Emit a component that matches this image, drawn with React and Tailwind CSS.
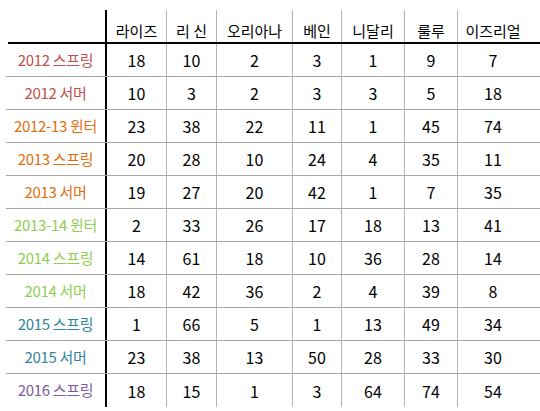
import React from "react";

const heroes = ["라이즈", "리 신", "오리아나", "베인", "니달리", "룰루", "이즈리얼"];
const widths = ["w-[60px]", "w-[50px]", "w-[76px]", "w-[49px]", "w-[63px]", "w-[53px]", "w-[70px]"];

const rows = [
  { label: "2012 스프링", color: "text-[#c0504d]", v: [18, 10, 2, 3, 1, 9, 7] },
  { label: "2012 서머", color: "text-[#c0504d]", v: [10, 3, 2, 3, 3, 5, 18] },
  { label: "2012-13 윈터", color: "text-[#e46c0a]", v: [23, 38, 22, 11, 1, 45, 74] },
  { label: "2013 스프링", color: "text-[#e46c0a]", v: [20, 28, 10, 24, 4, 35, 11] },
  { label: "2013 서머", color: "text-[#e46c0a]", v: [19, 27, 20, 42, 1, 7, 35] },
  { label: "2013-14 윈터", color: "text-[#8fce4f]", v: [2, 33, 26, 17, 18, 13, 41] },
  { label: "2014 스프링", color: "text-[#8fce4f]", v: [14, 61, 18, 10, 36, 28, 14] },
  { label: "2014 서머", color: "text-[#8fce4f]", v: [18, 42, 36, 2, 4, 39, 8] },
  { label: "2015 스프링", color: "text-[#31849b]", v: [1, 66, 5, 1, 13, 49, 34] },
  { label: "2015 서머", color: "text-[#31849b]", v: [23, 38, 13, 50, 28, 33, 30] },
  { label: "2016 스프링", color: "text-[#7a5e9f]", v: [18, 15, 1, 3, 64, 74, 54] },
];

export default function App() {
  return (
    <div
      className="w-[540px] h-[411px] bg-white text-black overflow-hidden pt-[10px]"
      style={{ fontFamily: '"Noto Sans CJK KR", "Noto Sans", sans-serif' }}
    >
      <div className="ml-[8px] w-[532px] flex h-[34px] border-b-2 border-black">
        <div className="w-[99px] border-r-2 border-black"></div>
        {heroes.map((h, i) => (
          <div
            key={h}
            className={`${widths[i]} flex items-end justify-center pb-[4px] text-[15px] leading-none ${i < 6 ? "border-r border-[#b4b4b4]" : ""}`}
          >
            {h}
          </div>
        ))}
        <div className="flex-1"></div>
      </div>
      <div className="ml-[6px] w-[534px]">
        {rows.map((r, ri) => (
          <div
            key={r.label}
            className={`flex h-[33px] ${ri < rows.length - 1 ? "border-b border-[#a6a6a6]" : "h-[28px]"}`}
          >
            <div
              className={`w-[101px] border-r-2 border-black flex items-center justify-center text-[15px] font-normal tracking-[-0.3px] ${r.color}`}
            >
              {r.label}
            </div>
            {r.v.map((n, i) => (
              <div
                key={i}
                className={`${widths[i]} flex items-center justify-center text-[16px] ${i < 6 ? "border-r border-[#b4b4b4]" : ""}`}
              >
                {n}
              </div>
            ))}
            <div className="flex-1"></div>
          </div>
        ))}
      </div>
    </div>
  );
}
